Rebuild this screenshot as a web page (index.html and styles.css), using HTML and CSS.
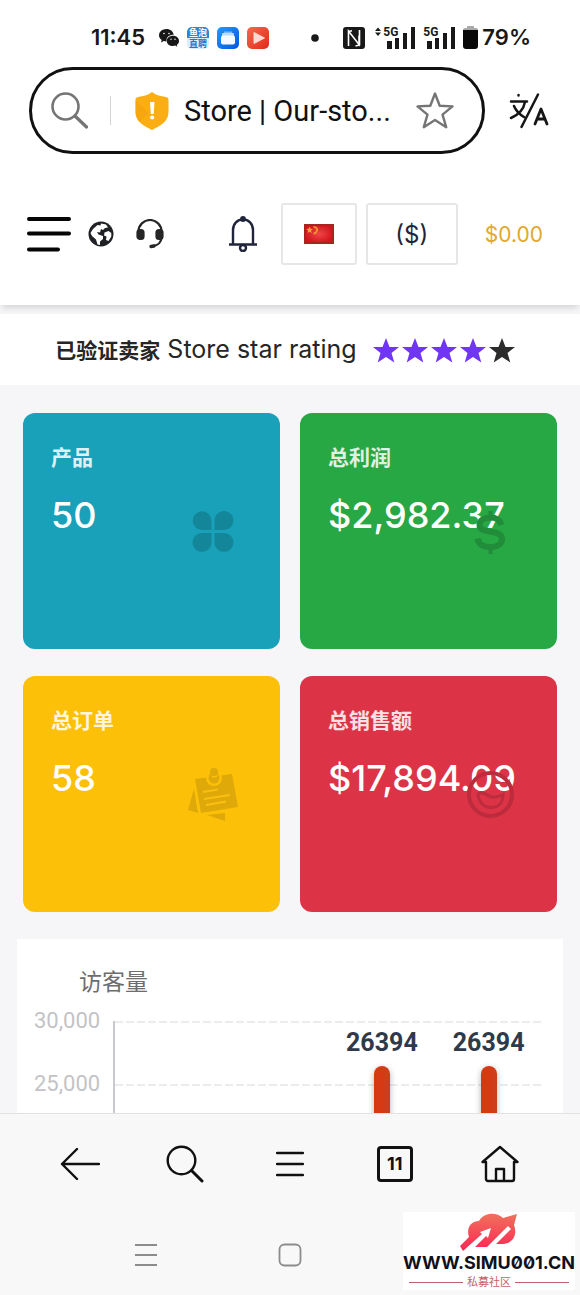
FILE: index.html
```html
<!DOCTYPE html>
<html lang="zh-CN">
<head>
<meta charset="utf-8">
<meta name="viewport" content="width=device-width, initial-scale=1">
<title>Store | Our-store</title>
<link rel="stylesheet" href="styles.css">
</head>
<body>
<div class="status">
  <div class="status-left">
    <time class="clock">11:45</time>
    <svg class="wechat" viewBox="0 0 20 18" width="20" height="18"><path fill="#181818" d="M7.500 0C3.300 0 0 2.800 0 6.300c0 2 1.100 3.700 2.700 4.800L2 13.500l2.800-1.400c.8.200 1.700.4 2.700.4C7 8.500 10 5.800 14.700 5.800 14.200 2.400 11.200 0 7.500 0z"/><path fill="#181818" d="M14 6.800c-3.500 0-6.200 2.200-6.200 5.100s2.700 5.100 6.200 5.100c.7 0 1.500-.1 2.200-.4l2.100 1.200-.5-2C19.200 14.900 20 13.500 20 11.900c0-2.900-2.600-5.100-6-5.100z"/><g fill="#fff"><circle cx="5" cy="4.500" r=".8"/><circle cx="10" cy="4.500" r=".8"/><circle cx="12" cy="10.300" r=".7"/><circle cx="16" cy="10.300" r=".7"/></g></svg>
    <span class="app-jobs"><span class="app-jobs-top">鱼泡</span><span>直聘</span></span>
    <svg viewBox="0 0 22 22" width="22" height="22"><defs><linearGradient id="blue" x2="1" y2="1"><stop stop-color="#1f9bff"/><stop offset="1" stop-color="#0754df"/></linearGradient></defs><rect width="22" height="22" rx="5" fill="url(#blue)"/><path d="M7 4.500h8v3H7z" fill="#79bafc"/><rect x="5" y="6" width="12" height="4" rx="1" fill="#b9dcff"/><rect x="4" y="8.500" width="14" height="9" rx="2" fill="#f4faff"/></svg>
    <svg viewBox="0 0 22 22" width="22" height="22"><defs><linearGradient id="red" x2="1" y2="1"><stop stop-color="#f5694a"/><stop offset="1" stop-color="#e02a1c"/></linearGradient></defs><rect width="22" height="22" rx="5" fill="url(#red)"/><path d="M7 5.500v11l10.500-5.500z" fill="#ffd9d2" stroke="#ffd9d2" stroke-linejoin="round"/></svg>
  </div>
  <div class="status-right">
    <svg class="dot" viewBox="0 0 8 8" width="8" height="8"><circle cx="4" cy="4" r="3.800" fill="#181818"/></svg>
    <svg class="nfc" viewBox="0 0 22 22" width="22" height="22"><rect width="22" height="22" rx="3" fill="#181818"/><path d="M5.500 19V4l10.500 13.500V8.500M5.500 4.500l3.500-.8M16.500 3v15l-4 1" fill="none" stroke="#fff" stroke-width="1.600"/></svg>
    <span class="signal"><svg viewBox="0 0 40 22" width="40" height="22"><path d="M0 4l3-3.500L6 4zM0 5.500h6L3 9z" fill="#181818"/><path d="M12 14h5v8h-5zM20 11h4v11h-4zM28 6h4v16h-4zM36 0h4v22h-4z" fill="#181818"/></svg><small class="gen">5G</small></span>
    <span class="signal"><svg viewBox="0 0 32 22" width="32" height="22"><path d="M4 14h5v8H4zM12 11h4v11h-4zM20 6h4v16h-4zM28 0h4v22h-4z" fill="#181818"/></svg><small class="gen gen-second">5G</small></span>
    <svg class="battery" viewBox="0 0 15 23" width="15" height="23"><path d="M4 0h7v2h2a2 2 0 0 1 2 2v2H0V4a2 2 0 0 1 2-2h2z" fill="#aaa"/><path d="M0 4h15v16a3 3 0 0 1-3 3H3a3 3 0 0 1-3-3z" fill="#080808"/></svg>
    <span class="percent">79%</span>
  </div>
</div>

<div class="browser">
  <div class="address">
    <svg viewBox="0 0 37 37" width="37" height="37" fill="none" stroke="#757575" stroke-width="2.600" stroke-linecap="round"><circle cx="14.500" cy="14.500" r="13"/><path d="M24 24l11.500 11" stroke-width="3.200"/></svg>
    <span class="divider"></span>
    <svg class="shield" viewBox="0 0 34 38" width="34" height="38"><path d="M17 0l3 2c4 2 8 2.500 11 3 2 .3 2.500 1.500 2.500 3v12c0 8-6 13-16.500 18C6.500 33 .5 28 .5 20V8c0-1.500.5-2.700 2.500-3 3-.5 7-1 11-3z" fill="#faae13"/><path d="M.5 20V8l13 13-9 9C2 27.500.5 24 .5 20z" fill="#f2a007" opacity=".5"/><path d="M15 10h4.500l-.8 12h-2.900z" fill="#fff"/><circle cx="17.200" cy="25.500" r="2.100" fill="#fff"/></svg>
    <input class="url" type="text" aria-label="地址" value="Store | Our-sto...">
    <button class="icon-button" aria-label="收藏"><svg viewBox="0 0 38 37" width="38" height="37" fill="none" stroke="#757575" stroke-width="2.400" stroke-linejoin="round"><path d="M19 1.500l4.700 12.300 12.800.6-10 8.200 3.700 12.600L19 28 7.800 35.200l3.700-12.600-10-8.200 12.800-.6z"/></svg></button>
  </div>
  <button class="icon-button" aria-label="翻译"><svg viewBox="0 0 40 36" width="40" height="36" fill="none" stroke="#161616" stroke-width="2.500" stroke-linecap="round" stroke-linejoin="round"><path d="M29 1.500L12.500 34M2 8.500h16M9.500 2v.5M5 13c2 5 5 8 10 11M16 9c-1.500 8-7 13-14 16"/><path d="M26 31l6-15 6 15M28 26h8" stroke-width="2.800"/></svg></button>
</div>

<header class="header">
  <button class="icon-button menu" aria-label="菜单"><svg viewBox="0 0 44 36" width="44" height="36" stroke="#050505" stroke-width="4" stroke-linecap="round"><path d="M2 3h40M2 17.500h40M2 33.500h29" /></svg></button>
  <a class="icon-button globe" href="#" aria-label="网站"><svg viewBox="0 0 26 26" width="26" height="26"><circle cx="13" cy="13" r="12.500" fill="#202124"/><path d="M9.500 4l3 .5.500-2 5 1 2 3-3 .5-2 2-2-1-1 3.500-3-.5 1.500 2.500 4.500 1.500 0 3-3 2.500v3.500l-2.500-.5-1.500-5L4 15l-1.500-3L5 8zM16.500 11.500l4-1.500 2.800 2v3.500L20.500 20l-2.500-1 .500-3.500-2.500-1z" fill="#fff"/></svg></a>
  <a class="icon-button" href="#" aria-label="客服"><svg viewBox="0 0 28 30" width="28" height="30" fill="none" stroke="#262626" stroke-width="2.200"><path d="M2.500 14V12.500a11.500 11.500 0 0 1 23 0V18c0 5-3.500 8.500-9 9"/><rect x="1.500" y="11" width="6" height="9" rx="2.500" fill="#262626"/><rect x="20.500" y="11" width="6" height="9" rx="2.500" fill="#262626"/><path d="M15 27.500l3-.5" stroke-width="3.400" stroke-linecap="round"/></svg></a>
  <button class="icon-button bell" aria-label="通知"><svg viewBox="0 0 28 36" width="28" height="36" fill="none" stroke="#20253b" stroke-width="2.400"><path d="M4 28V14C4 7.500 8.500 3.500 14 3.500S24 7.500 24 14v14M0 28.500h28"/><circle cx="14" cy="3" r="1.700" fill="#20253b"/><circle cx="14" cy="32" r="3"/></svg></button>
  <button class="picker language" aria-label="中文"><svg viewBox="0 0 30 20" width="30" height="20"><defs><radialGradient id="flag"><stop stop-color="#ef4646"/><stop offset="1" stop-color="#d3161e"/></radialGradient></defs><rect x="1" y="1" width="28" height="18" fill="url(#flag)" stroke="#a82420" stroke-width="2"/><path d="M5.500 2.500l1 2.300 2.500.2-2 1.600.7 2.400-2.200-1.300L3.500 9l.6-2.400-2-1.600 2.500-.2z" fill="#f6a53b"/><path d="M9.500 3c3 0 4 2 3.500 3.500s-2 3-3.500 3" fill="none" stroke="#f0912f" stroke-width="2"/></svg></button>
  <button class="picker currency">($)</button>
  <a class="balance" href="#">$0.00</a>
</header>

<main class="content">
  <section class="rating">
    <p class="rating-text"><strong>已验证卖家</strong> Store star rating</p>
    <div class="stars" role="img" aria-label="4 / 5">
      <svg class="star" viewBox="0 0 26 25"><path d="M13 0l3.500 9H26l-7.500 6 2.800 9.500L13 19l-8.300 5.500L7.500 15 0 9h9.500z"/></svg>
      <svg class="star" viewBox="0 0 26 25"><path d="M13 0l3.500 9H26l-7.500 6 2.800 9.500L13 19l-8.300 5.500L7.500 15 0 9h9.500z"/></svg>
      <svg class="star" viewBox="0 0 26 25"><path d="M13 0l3.500 9H26l-7.500 6 2.800 9.500L13 19l-8.300 5.500L7.500 15 0 9h9.500z"/></svg>
      <svg class="star" viewBox="0 0 26 25"><path d="M13 0l3.500 9H26l-7.500 6 2.800 9.500L13 19l-8.300 5.500L7.500 15 0 9h9.500z"/></svg>
      <svg class="star star-empty" viewBox="0 0 26 25"><path d="M13 0l3.500 9H26l-7.500 6 2.800 9.500L13 19l-8.300 5.500L7.500 15 0 9h9.500z"/></svg>
    </div>
  </section>

  <section class="cards">
    <article class="card card-teal">
      <h2 class="card-label">产品</h2>
      <p class="card-value">50</p>
      <svg class="card-icon" viewBox="0 0 52 52" fill="#138799"><path d="M24.500 25H15a9.400 9.400 0 1 1 9.500-9.500zM27.500 25V15.500A9.500 9.500 0 1 1 37 25zM24.500 28v9.500A9.500 9.500 0 1 1 15 28zM27.500 28H37a9.500 9.500 0 1 1-9.500 9.500z"/></svg>
    </article>
    <article class="card card-green">
      <h2 class="card-label">总利润</h2>
      <p class="card-value">$2,982.37</p>
      <svg class="card-icon" viewBox="0 0 52 52" fill="none" stroke="#218c3a" stroke-width="6"><path d="M37.500 20C36 14.500 31.500 12.500 26 12.500c-6.500 0-10.500 3-10.500 7.500 0 10 22.500 3.500 22.500 14 0 5-4.500 8-11.500 8-7.500 0-12-3-13-8.500"/><path d="M26.500 6v7M26.500 41v8" stroke-width="4"/></svg>
    </article>
    <article class="card card-yellow">
      <h2 class="card-label">总订单</h2>
      <p class="card-value">58</p>
      <svg class="card-icon" viewBox="0 0 52 52"><path fill="#dfa909" d="M8 11l37-5 6 33-37 6zM7 21l4 24-10-3zM20 47l18-2v8z"/><circle cx="27" cy="10" r="8" fill="#fdc008"/><g fill="#dfa909"><circle cx="27" cy="10" r="5.500"/><circle cx="27" cy="4" r="4"/></g><path d="M24.500 8q3 2 6-.5" fill="none" stroke="#fdc008" stroke-width="1.500"/><path d="M16 24l15-2.500M17 31l26-4M19 37l20-3.500" stroke="#f9bf13" stroke-width="2"/></svg>
    </article>
    <article class="card card-red">
      <h2 class="card-label">总销售额</h2>
      <p class="card-value">$17,894.09</p>
      <svg class="card-icon" viewBox="0 0 52 52" fill="none" stroke="#bc2c3d" stroke-width="4"><circle cx="26.500" cy="26.500" r="21.500"/><path d="M14 26c3-2 6-1.500 10 1.500s8 2.500 15-1c0 8-4.500 13-12 13S14.500 34 14 26z" stroke-width="3"/></svg>
    </article>
  </section>

  <section class="chart">
    <h2 class="chart-title">访客量</h2>
    <div class="chart-body">
      <div class="axis"><span>30,000</span><span>25,000</span></div>
      <div class="plot">
        <div class="lines"><i></i><i></i><i></i><i></i><i></i><i></i></div>
        <div class="bars">
          <div class="column"></div>
          <div class="column"></div>
          <div class="column"><span class="bar-label">26394</span><span class="bar" style="height:88%"></span></div>
          <div class="column"><span class="bar-label">26394</span><span class="bar" style="height:88%"></span></div>
        </div>
      </div>
    </div>
  </section>
</main>

<footer class="bottom">
  <nav class="toolbar">
    <button class="icon-button" aria-label="返回"><svg viewBox="0 0 40 36" width="40" height="36" fill="none" stroke="#111" stroke-width="2.400" stroke-linecap="round" stroke-linejoin="round"><path d="M39 18H2M17 3L2 18l15 15"/></svg></button>
    <button class="icon-button" aria-label="搜索"><svg viewBox="0 0 38 38" width="38" height="38" fill="none" stroke="#111" stroke-width="2.400" stroke-linecap="round"><circle cx="15.500" cy="15.500" r="13.800"/><path d="M25.500 25.500L36 36" stroke-width="3"/></svg></button>
    <button class="icon-button" aria-label="菜单"><svg viewBox="0 0 28 26" width="28" height="26" stroke="#111" stroke-width="2.400" stroke-linecap="round"><path d="M1 2h26M1 13h26M1 24h26"/></svg></button>
    <button class="tabs" aria-label="标签页">11</button>
    <button class="icon-button" aria-label="主页"><svg viewBox="0 0 38 38" width="38" height="38" fill="none" stroke="#111" stroke-width="2.400" stroke-linejoin="round" stroke-linecap="round"><path d="M5 17H1.500L19 2l17.500 15H33v17a2 2 0 0 1-2 2H7a2 2 0 0 1-2-2zM15 36V24h8v12"/></svg></button>
  </nav>
  <nav class="system">
    <button class="icon-button" aria-label="最近任务"><svg viewBox="0 0 24 24" width="24" height="24" stroke="#8c8c8c" stroke-width="2"><path d="M1 2h22M1 12h22M1 22h22"/></svg></button>
    <button class="icon-button" aria-label="主屏幕"><svg viewBox="0 0 24 24" width="24" height="24" fill="none" stroke="#8c8c8c" stroke-width="1.800"><rect x="1.500" y="1.500" width="21" height="21" rx="5"/></svg></button>
  </nav>
  <div class="brand">
    <svg viewBox="0 0 60 40" width="60" height="40"><defs><linearGradient id="cloud" gradientUnits="userSpaceOnUse" x1="0" y1="2" x2="0" y2="36"><stop stop-color="#f0705c"/><stop offset="1" stop-color="#fb2d55"/></linearGradient></defs><path fill="url(#cloud)" d="M10 25C7 16 12 9 20 9 25 0 38 0 44 6l14-4-3 11c4 10-2 19-11 19h-7L52 17l-3-3-21 21H16l11-11 2 2 3-10-11 4 2 2L4 39l-3-5z"/></svg>
    <strong class="brand-name">WWW.SIMU001.CN</strong>
    <span class="brand-sub">私募社区</span>
  </div>
</footer>
</body>
</html>
```
FILE: styles.css
```css
* {
  box-sizing: border-box;
}

body {
  margin: 0;
  height: 100vh;
  display: flex;
  flex-direction: column;
  overflow: hidden;
  background: #fff;
  color: #262626;
  font-family: Inter, "Noto Sans CJK SC", sans-serif;
}

h2, p {
  margin: 0;
}

svg {
  display: block;
  flex: none;
}

button, input {
  margin: 0;
  padding: 0;
  border: 0;
  background: none;
  color: inherit;
  font-family: inherit;
}

a {
  color: inherit;
  text-decoration: none;
}

.icon-button {
  flex: none;
  display: block;
}

/* status bar */
.status {
  flex: none;
  display: flex;
  justify-content: space-between;
  align-items: center;
  padding: 22px 49px 14px 91px;
  color: #181818;
}

.status-left, .status-right {
  display: flex;
  align-items: center;
  gap: 8px;
}

.clock, .percent {
  font-size: 22px;
  line-height: 31px;
  font-weight: 600;
}

.wechat {
  margin-left: 6px;
}

.app-jobs {
  width: 22px;
  border-radius: 5px;
  overflow: hidden;
  background: #d9edfd;
  color: #1f78c8;
  font-size: 9px;
  line-height: 11px;
  font-weight: 700;
  text-align: center;
}

.app-jobs span {
  display: block;
}

.app-jobs-top {
  background: #2b86d3;
  color: #fff;
}

.nfc {
  margin: 0 2px 0 16px;
}

.signal {
  position: relative;
}

.gen {
  position: absolute;
  left: 8px;
  top: -1px;
  font-family: Roboto, sans-serif;
  font-size: 12px;
  line-height: 12px;
  font-weight: 700;
}

.gen-second {
  left: 0;
}

.percent {
  margin-left: -4px;
}

/* address bar */
.browser {
  flex: none;
  display: flex;
  align-items: center;
  gap: 24px;
  padding: 0 31px 0 29px;
}

.address {
  flex: 1;
  min-width: 0;
  height: 87px;
  display: flex;
  align-items: center;
  padding: 0 28px 0 19px;
  border: 3px solid #111;
  border-radius: 44px;
}

.divider {
  flex: none;
  width: 1px;
  height: 29px;
  margin: 0 24px 0 22px;
  background: #d4d4d4;
}

.url {
  flex: 1;
  min-width: 0;
  margin-left: 15px;
  color: #111;
  font-family: Roboto, sans-serif;
  font-size: 29px;
  line-height: 40px;
}

/* store header */
.header {
  flex: none;
  display: flex;
  align-items: center;
  padding: 49px 37px 40px 27px;
  background: #fff;
  box-shadow: 0 5px 6px -2px rgba(0, 0, 0, .13);
  position: relative;
}

.globe {
  margin: 0 22px 0 17px;
}

.bell {
  margin: 0 24px 0 auto;
}

.picker {
  height: 62px;
  border: 2px solid #e6e6e8;
  border-radius: 3px;
  color: #20253b;
  font-size: 24px;
}

.language {
  width: 76px;
  margin-right: 9px;
  display: grid;
  place-items: center;
}

.currency {
  width: 92px;
  margin-right: 27px;
}

.balance {
  color: #e0a82c;
  font-size: 21px;
}

/* page content */
.content {
  flex: 1;
  min-height: 0;
  overflow: hidden;
  padding-top: 9px;
  background: #f6f6f9;
}

.rating {
  display: flex;
  align-items: center;
  justify-content: center;
  gap: 16px;
  padding: 17px 22px 16px 12px;
  background: #fff;
}

.rating-text {
  font-size: 25px;
  line-height: 36px;
  white-space: nowrap;
}

.rating-text strong {
  font-size: 21px;
  font-weight: 700;
}

.stars {
  display: flex;
  gap: 3px;
}

.star {
  width: 26px;
  height: 25px;
  fill: #7136f5;
}

.star-empty {
  fill: #2c2c2c;
}

.cards {
  display: grid;
  grid-template-columns: 1fr 1fr;
  gap: 27px 20px;
  padding: 28px 23px 27px;
}

.card {
  position: relative;
  min-height: 236px;
  padding: 28px;
  border-radius: 12px;
  color: #fff;
}

.card-teal { background: #18a1b8; }
.card-green { background: #28a745; }
.card-yellow { background: #fdc008; }
.card-red { background: #dc3446; }

.card-label {
  margin-bottom: 16px;
  font-size: 21px;
  line-height: 34px;
  font-weight: 700;
  opacity: .85;
}

.card-value {
  font-size: 36px;
  line-height: 48px;
  font-weight: 500;
  white-space: nowrap;
}

.card-icon {
  position: absolute;
  right: 41px;
  top: calc(50% - 26px);
  width: 52px;
  height: 52px;
  overflow: visible;
}

/* visitors chart */
.chart {
  margin: 0 17px;
  padding: 26px 21px 40px 17px;
  background: #fff;
}

.chart-title {
  padding-left: 45px;
  color: #6d6d6d;
  font-size: 23px;
  line-height: 34px;
  font-weight: 400;
}

.chart-body {
  display: grid;
  grid-template-columns: 79px 1fr;
  height: 378px;
  margin-top: 22px;
  font-family: Roboto, sans-serif;
}

.axis {
  display: grid;
  grid-template-rows: 63px 63px;
  margin-top: -32px;
  padding-right: 15px;
  color: #c3c3c5;
  font-size: 22px;
  line-height: 63px;
  text-align: right;
}

.plot {
  display: grid;
  border-left: 2px solid #cacace;
}

.lines, .bars {
  grid-area: 1 / 1;
  display: grid;
}

.lines i {
  height: 2px;
  background: repeating-linear-gradient(90deg, #ececee 0 8px, transparent 8px 11px);
}

.bars {
  grid-template-columns: repeat(4, 1fr);
}

.column {
  display: flex;
  flex-direction: column;
  align-items: center;
  justify-content: flex-end;
}

.bar-label {
  margin-bottom: 8px;
  color: #2e3a4a;
  font-size: 25px;
  line-height: 30px;
  font-weight: 700;
}

.bar {
  flex: none;
  width: 16px;
  border-radius: 8px 8px 0 0;
  background: linear-gradient(90deg, #d63a12 50%, #c9401f);
  box-shadow: 0 2px 6px rgba(0, 0, 0, .3);
}

/* browser and system navigation */
.bottom {
  flex: none;
  position: relative;
  border-top: 1px solid #e2e2e4;
  background: #f8f8f8;
}

.toolbar {
  display: grid;
  grid-template-columns: repeat(5, 1fr);
  place-items: center;
  height: 100px;
  padding: 0 28px;
}

.tabs {
  width: 36px;
  height: 36px;
  border: 3px solid #111;
  border-radius: 4px;
  color: #111;
  font-size: 18px;
  line-height: 28px;
  font-weight: 700;
}

.system {
  display: grid;
  grid-template-columns: repeat(3, 1fr);
  place-items: center;
  height: 81px;
  padding: 0 74px;
}

.brand {
  position: absolute;
  right: 5px;
  bottom: 5px;
  width: 172px;
  display: flex;
  flex-direction: column;
  align-items: center;
  background: #fff;
  color: #11111b;
}

.brand-name {
  font-size: 18px;
  line-height: 22px;
  font-weight: 700;
  font-feature-settings: "zero";
  white-space: nowrap;
}

.brand-sub {
  align-self: stretch;
  display: flex;
  align-items: center;
  gap: 4px;
  padding: 0 6px;
  color: #c45f68;
  font-size: 11px;
  line-height: 16px;
}

.brand-sub::before, .brand-sub::after {
  content: "";
  flex: 1;
  height: 1px;
  background: #c45f68;
}
```
